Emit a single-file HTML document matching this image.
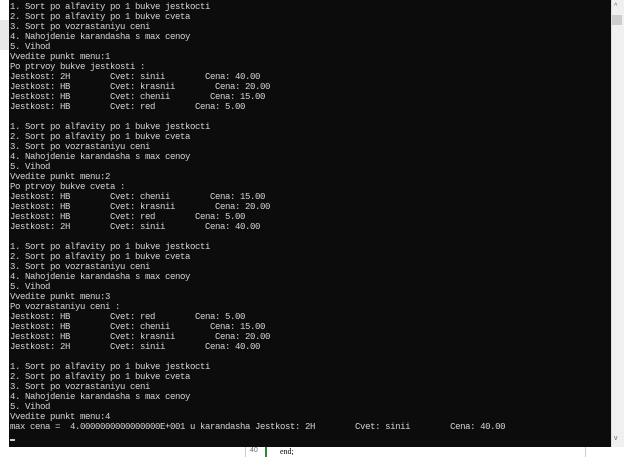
<!DOCTYPE html>
<html><head><style>
html,body{margin:0;padding:0;width:624px;height:457px;overflow:hidden;background:#f0f0f0;position:relative}
#con{position:absolute;left:9px;top:0;width:602px;height:447px;background:#0c0c0c}
#sb{position:absolute;left:611px;top:0;width:11px;height:447px;background:#f0f0f0;border-left:1px solid #ddd}
pre{position:absolute;left:10px;top:2px;margin:0;font-family:"Liberation Mono",monospace;font-size:9px;letter-spacing:-0.4px;line-height:10px;color:#d4d4d4;white-space:pre}
#bot{position:absolute;left:0;top:447px;width:624px;height:10px;background:#fff}
</style></head><body>
<div style="position:absolute;left:0;top:0;width:9px;height:457px;background:#fff"></div>
<div style="position:absolute;left:0;top:20px;width:9px;height:30px;background:#e8e8e8"></div>
<div id="con"></div>
<div id="sb"><div style="position:absolute;left:0;top:15px;width:10px;height:10px;background:#cdcdcd"></div>
<div style="position:absolute;left:2px;top:3px;font:7px sans-serif;color:#666">^</div>
<div style="position:absolute;left:2px;top:435px;font:7px sans-serif;color:#666">v</div></div>
<pre>1. Sort po alfavity po 1 bukve jestkocti
2. Sort po alfavity po 1 bukve cveta
3. Sort po vozrastaniyu ceni
4. Nahojdenie karandasha s max cenoy
5. Vihod
Vvedite punkt menu:1
Po ptrvoy bukve jestkosti :
Jestkost: 2H        Cvet: sinii        Cena: 40.00
Jestkost: HB        Cvet: krasnii        Cena: 20.00
Jestkost: HB        Cvet: chenii        Cena: 15.00
Jestkost: HB        Cvet: red        Cena: 5.00

1. Sort po alfavity po 1 bukve jestkocti
2. Sort po alfavity po 1 bukve cveta
3. Sort po vozrastaniyu ceni
4. Nahojdenie karandasha s max cenoy
5. Vihod
Vvedite punkt menu:2
Po ptrvoy bukve cveta :
Jestkost: HB        Cvet: chenii        Cena: 15.00
Jestkost: HB        Cvet: krasnii        Cena: 20.00
Jestkost: HB        Cvet: red        Cena: 5.00
Jestkost: 2H        Cvet: sinii        Cena: 40.00

1. Sort po alfavity po 1 bukve jestkocti
2. Sort po alfavity po 1 bukve cveta
3. Sort po vozrastaniyu ceni
4. Nahojdenie karandasha s max cenoy
5. Vihod
Vvedite punkt menu:3
Po vozrastaniyu ceni :
Jestkost: HB        Cvet: red        Cena: 5.00
Jestkost: HB        Cvet: chenii        Cena: 15.00
Jestkost: HB        Cvet: krasnii        Cena: 20.00
Jestkost: 2H        Cvet: sinii        Cena: 40.00

1. Sort po alfavity po 1 bukve jestkocti
2. Sort po alfavity po 1 bukve cveta
3. Sort po vozrastaniyu ceni
4. Nahojdenie karandasha s max cenoy
5. Vihod
Vvedite punkt menu:4
max cena =  4.0000000000000000E+001 u karandasha Jestkost: 2H        Cvet: sinii        Cena: 40.00
<span style="display:inline-block;width:5px;height:2px;background:#ccc;vertical-align:-2px"></span></pre>
<div id="bot">
<div style="position:absolute;left:245px;top:0;width:1px;height:10px;background:#ccc"></div>
<div style="position:absolute;left:265px;top:0;width:2px;height:10px;background:#2a8a2a"></div>
<div style="position:absolute;left:280px;top:0;font:8px 'Liberation Serif',serif;color:#000">end;</div>
<div style="position:absolute;left:250px;top:0;font:7px 'Liberation Sans',sans-serif;color:#666">40</div>
<div style="position:absolute;left:585px;top:0;width:1px;height:10px;background:#ccc"></div>
</div>
</body></html>
